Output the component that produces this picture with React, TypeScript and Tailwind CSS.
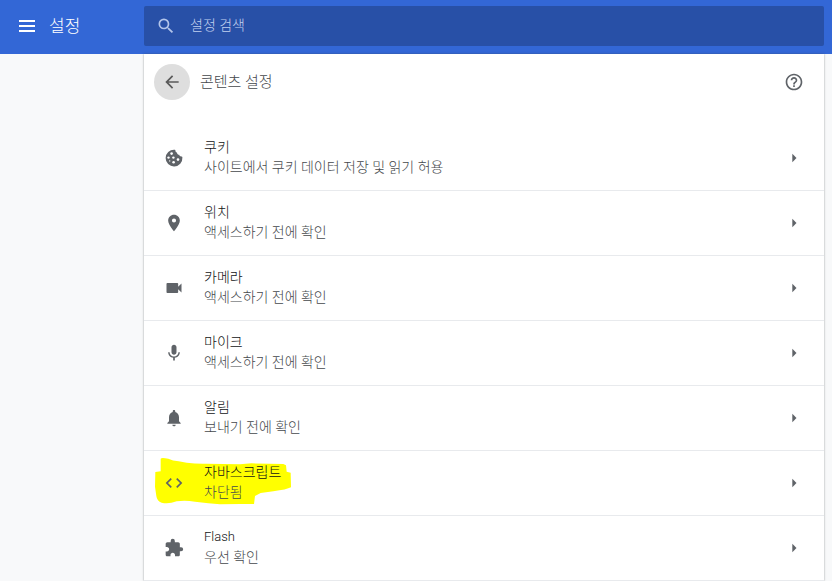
import React from "react";
import {
  MdArrowBack,
  MdArrowRight,
  MdCode,
  MdExtension,
  MdHelpOutline,
  MdMic,
  MdNotifications,
  MdPlace,
  MdSearch,
  MdVideocam,
} from "react-icons/md";

function MenuIcon() {
  return (
    <svg viewBox="0 0 16 12" className="h-3 w-4" fill="currentColor" aria-hidden="true">
      <path d="M0 0h16v2H0zM0 5h16v2H0zM0 10h16v2H0z" />
    </svg>
  );
}

function CookieIcon() {
  return (
    <svg viewBox="0 0 20 20" className="size-5" aria-hidden="true">
      <path
        fill="currentColor"
        d="M10.4 1.7c.7 0 1.1.3 1 .9-.1 1 .6 1.9 1.6 2.1.2 1.3 1 2.1 2.2 2.1.3 1.2 1.1 1.8 2.2 1.7.6 0 1 .3 1 1A8.4 8.4 0 1 1 10.4 1.7z"
      />
      <g fill="#fff">
        <circle cx="7.6" cy="5.6" r="1.3" />
        <circle cx="4.5" cy="9.6" r="1.2" />
        <circle cx="9.4" cy="9.6" r="1.2" />
        <circle cx="9.6" cy="14.2" r="1.3" />
        <circle cx="5.7" cy="12.9" r=".7" />
        <circle cx="14" cy="11.6" r="1.3" />
      </g>
    </svg>
  );
}

// marker stroke behind the row content
function Highlight() {
  return (
    <svg
      viewBox="12 3 444 192"
      className="pointer-events-none absolute top-0 left-0 h-16 w-[148px]"
      aria-hidden="true"
    >
      <path
        fill="#ff0"
        d="M62 26Q64 22 85 26Q98 33 116 34L140 38Q170 42 200 41L300 43L335 40L430 42L438 46L440 65L452 68L453 112Q440 119 400 124L362 129L345 138L342 162L300 162L240 163L205 160L165 155Q135 150 110 154Q85 163 65 158Q51 154 49 138L45 110L46 66L62 64Z"
      />
    </svg>
  );
}

export default function App() {
  const data = [
    { title: "쿠키", status: "사이트에서 쿠키 데이터 저장 및 읽기 허용", icon: <CookieIcon /> },
    { title: "위치", status: "액세스하기 전에 확인", icon: <MdPlace size={20} /> },
    { title: "카메라", status: "액세스하기 전에 확인", icon: <MdVideocam size={20} /> },
    { title: "마이크", status: "액세스하기 전에 확인", icon: <MdMic size={20} /> },
    { title: "알림", status: "보내기 전에 확인", icon: <MdNotifications size={20} /> },
    { title: "자바스크립트", status: "차단됨", icon: <MdCode size={20} />, marked: true },
    { title: "Flash", status: "우선 확인", icon: <MdExtension size={20} /> },
  ];

  return (
    <div className="flex min-h-screen flex-col bg-[#f8f9fa] font-[Roboto,'Noto_Sans_CJK_KR',sans-serif] font-light">
      <header className="flex h-[54px] items-center bg-[#3367d6] pr-2 pb-0.5 text-white">
        <div className="flex w-36 shrink-0 items-center gap-3.5 pl-[19px]">
          <button type="button" aria-label="메뉴">
            <MenuIcon />
          </button>
          <h1 className="text-[17px] leading-6 font-light">설정</h1>
        </div>
        <label className="flex h-10 flex-1 items-center gap-3.5 rounded-xs bg-[#2850a7] pl-3 text-[#b3c5ea]">
          <MdSearch size={20} aria-hidden="true" />
          <input
            type="text"
            aria-label="설정 검색"
            placeholder="설정 검색"
            className="min-w-0 flex-1 bg-transparent pb-0.5 text-sm outline-none placeholder:text-[#c2d1ef]"
          />
        </label>
      </header>

      <div className="flex flex-1 pr-2 pl-36">
        <main className="min-w-0 flex-1 bg-white shadow-[0_0_2px_rgba(60,64,67,0.5)]">
          <div className="flex h-[71px] items-start justify-between pt-2.5 pr-5 pl-2.5">
            <div className="flex items-center gap-2.5">
              <button
                type="button"
                aria-label="뒤로"
                className="flex size-9 items-center justify-center rounded-full bg-[#dedede] text-[#5a5a5a]"
              >
                <MdArrowBack size={20} />
              </button>
              <h2 className="text-[15px] leading-6 text-[#45484c]">콘텐츠 설정</h2>
            </div>
            <button
              type="button"
              aria-label="도움말"
              className="flex h-9 items-center text-[#5f6368]"
            >
              <MdHelpOutline size={20} />
            </button>
          </div>

          <ul className="border-b border-[#e8eaed]">
            {data.map((item) => (
              <li
                key={item.title}
                className="relative border-t border-[#e8eaed] first:border-transparent"
              >
                {item.marked && <Highlight />}
                <button
                  type="button"
                  className="relative flex h-16 w-full items-center px-5 text-left text-[#5f6368]"
                >
                  <span className="w-10 shrink-0">{item.icon}</span>
                  <span className="flex min-w-0 flex-1 flex-col pb-0.5 text-sm leading-5">
                    <span
                      className={
                        item.title === "Flash"
                          ? "text-[13px] leading-5 text-[#111315]"
                          : "text-[#111315]"
                      }
                    >
                      {item.title}
                    </span>
                    <span className="text-[#45484c]">{item.status}</span>
                  </span>
                  <MdArrowRight size={20} />
                </button>
              </li>
            ))}
          </ul>
        </main>
      </div>
    </div>
  );
}
